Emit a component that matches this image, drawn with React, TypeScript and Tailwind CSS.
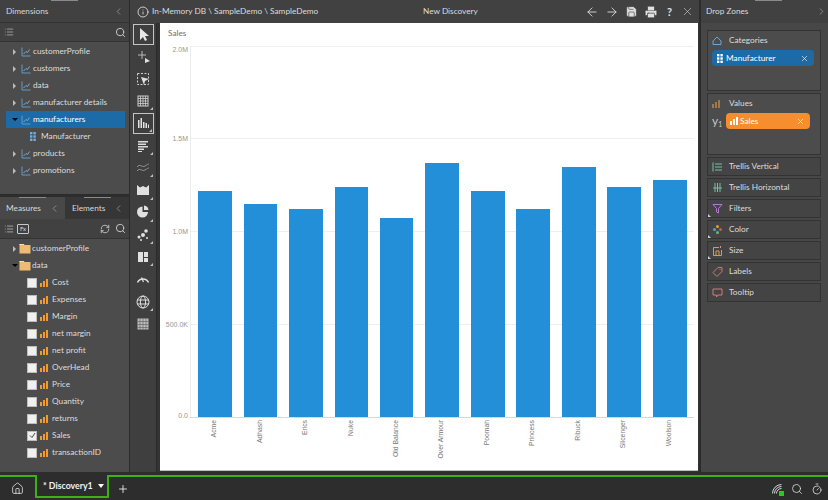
import { ArrowLeft, ArrowRight, ChevronLeft, ChevronRight, Home, Info, List, Plus, Printer, RefreshCw, Save, Search, Timer, X } from "lucide-react";
import type { ReactNode } from "react";

const FONT = "font-[family-name:Lato,sans-serif]";

const DIMENSIONS = ["customerProfile", "customers", "data", "manufacturer details"];
const MEASURES = ["Cost", "Expenses", "Margin", "net margin", "net profit", "OverHead", "Price", "Quantity", "returns", "Sales", "transactionID"];

const BARS = [
  { name: "Acme", x: 198, w: 34, top: 191 },
  { name: "Adhash", x: 244, w: 33, top: 204 },
  { name: "Erics", x: 289, w: 34, top: 209 },
  { name: "Nuke", x: 335, w: 33, top: 187 },
  { name: "Old Balance", x: 380, w: 33, top: 218 },
  { name: "Over Armour", x: 425, w: 34, top: 163 },
  { name: "Poomah", x: 471, w: 34, top: 191 },
  { name: "Princess", x: 516, w: 34, top: 209 },
  { name: "Ribuck", x: 562, w: 34, top: 167 },
  { name: "Slicenger", x: 607, w: 34, top: 187 },
  { name: "Woolson", x: 653, w: 34, top: 180 },
];

// labels sit inside the plot at both ends, so ty differs from y there
const TICKS = [
  { label: "2.0M", y: 46, ty: 52 },
  { label: "1.5M", y: 138, ty: 140.5 },
  { label: "1.0M", y: 231, ty: 233.5 },
  { label: "500.0K", y: 324, ty: 326.5 },
  { label: "0.0", y: 417, ty: 417.5 },
];

function Arrow({ open }: { open?: boolean }) {
  return open ? (
    <span className="block shrink-0 w-0 h-0 ml-[6px] mr-[3px] border-x-[3px] border-x-transparent border-t-[3px] border-t-black" />
  ) : (
    <span className="block shrink-0 w-0 h-0 ml-[7px] mr-[5px] border-y-[3px] border-y-transparent border-l-[3px] border-l-[#bbbbbb]" />
  );
}

function HierIcon() {
  return (
    <svg width="10" height="10" viewBox="0 0 10 10" fill="none" stroke="#5d9ccb" strokeWidth="1" className="mr-[2px] shrink-0">
      <path d="M1 0.5V9H9.5" />
      <path d="M2.5 7L5 4.5L6.5 5.5L8.5 2.5" stroke="#8ba6ba" />
    </svg>
  );
}

function Folder() {
  return (
    <svg width="12" height="11" viewBox="0 0 12 11" className="-ml-[2px] mr-[1px] shrink-0">
      <path d="M0.5 1H4.5L5.5 2H11.5V10.5H0.5Z" fill="#efbb72" />
      <path d="M0.5 1H4.5L5.5 2H0.5Z" fill="#f8e0b8" />
    </svg>
  );
}

function BarsIcon({ color = "#f29a2e" }: { color?: string }) {
  return (
    <svg width="8" height="8" viewBox="0 0 8 8" fill={color} className="shrink-0">
      <rect x="0" y="4" width="2" height="4" />
      <rect x="3" y="2" width="2" height="6" />
      <rect x="6" y="0" width="2" height="8" />
    </svg>
  );
}

function DotsIcon({ color = "#6fb0e0" }: { color?: string }) {
  return (
    <svg width="6" height="9" viewBox="0 0 6 9" fill={color} className="shrink-0">
      {[0, 3.3, 6.6].map((y) => (
        <g key={y}>
          <rect x="0" y={y} width="2.4" height="2.4" />
          <rect x="3.4" y={y} width="2.4" height="2.4" />
        </g>
      ))}
    </svg>
  );
}

function Row({ children, selected }: { children: ReactNode; selected?: boolean }) {
  return (
    <div className={`h-[17px] flex items-center text-[8.25px] text-[#dcdcdc] mr-[4px] ${selected ? "bg-[#1c6aa6]" : ""}`}>
      {children}
    </div>
  );
}

function Grip({ className }: { className: string }) {
  return <span className={`absolute top-0 h-[1px] bg-[#8a8a8a] ${className}`} />;
}

function LeftColumn() {
  return (
    <div className="w-[130px] flex flex-col border-r border-[#2b2b2b]">
      <div className="relative h-[195px] flex flex-col bg-[#4c4c4c] border-b border-[#2b2b2b]">
        <Grip className="left-[51px] w-[27px]" />
        <div className="h-[23px] bg-[#414141] flex items-center justify-between pl-[6px] pr-[5px] border-b border-[#333333]">
          <span className="text-[8.25px] text-[#d8d8d8]">Dimensions</span>
          <ChevronLeft size={11} color="#bdbdbd" strokeWidth={1.2} />
        </div>
        <div className="h-[19px] bg-[#414141] flex items-center justify-between pl-[4px] pr-[3px] border-b border-[#333333]">
          <List size={10} color="#a8a8a8" />
          <Search size={11} color="#cfcfcf" />
        </div>
        <div className="pt-[1px] pl-[6px]">
          {DIMENSIONS.map((d) => (
            <Row key={d}>
              <Arrow />
              <HierIcon />
              {d}
            </Row>
          ))}
          <Row selected>
            <Arrow open />
            <HierIcon />
            <span className="text-white">manufacturers</span>
          </Row>
          <Row>
            <span className="ml-[24px] mr-[5px] flex"><DotsIcon /></span>
            Manufacturer
          </Row>
          {["products", "promotions"].map((d) => (
            <Row key={d}>
              <Arrow />
              <HierIcon />
              {d}
            </Row>
          ))}
        </div>
      </div>
      <div className="relative mt-[2px] flex-1 flex flex-col bg-[#4c4c4c]">
        <Grip className="left-[19px] w-[27px]" />
        <Grip className="left-[84px] w-[27px]" />
        <div className="h-[22px] flex text-[8.25px] text-[#d8d8d8]">
          <div className="w-[65px] flex items-center justify-between bg-[#484848] pl-[6px] pr-[5px]">
            Measures
            <ChevronLeft size={11} color="#bdbdbd" strokeWidth={1.2} />
          </div>
          <div className="flex-1 flex items-center justify-between bg-[#363636] pl-[7px] pr-[5px]">
            Elements
            <ChevronLeft size={11} color="#bdbdbd" strokeWidth={1.2} />
          </div>
        </div>
        <div className="h-[20px] bg-[#414141] flex items-center pl-[4px] pr-[3px] border-b border-[#333333]">
          <List size={10} color="#b5b5b5" />
          <span className="ml-[3px] w-[12px] h-[10px] border border-[#c8c8c8] rounded-[1px] text-[6px] leading-[8px] text-center text-[#d8d8d8]">Fx</span>
          <RefreshCw size={10} color="#cfcfcf" className="ml-auto mr-[5px]" />
          <Search size={11} color="#cfcfcf" />
        </div>
        <div className="pt-[1px] pl-[6px]">
          <Row>
            <Arrow />
            <Folder />
            customerProfile
          </Row>
          <Row>
            <Arrow open />
            <Folder />
            data
          </Row>
          {MEASURES.map((m) => (
            <Row key={m}>
              <span className="ml-[21px] mr-[3px] w-[10px] h-[10px] bg-[#f0f0f0] border border-[#bdbdbd] flex items-center justify-center shrink-0">
                {m === "Sales" && (
                  <svg width="7" height="7" viewBox="0 0 7 7" fill="none" stroke="#4a4a4a" strokeWidth="1">
                    <path d="M1 3.5L3 5.5L6 1" />
                  </svg>
                )}
              </span>
              <BarsIcon />
              <span className="ml-[4px]">{m}</span>
            </Row>
          ))}
        </div>
      </div>
    </div>
  );
}

// chart type palette
const TOOL_PATHS: ReactNode[] = [
  <path key="a" d="M5 2L5 14L8 11L10 15L12 14L10 10L14 10Z" fill="#e8e8e8" />,
  <g key="b" stroke="#b8b8b8" fill="none"><path d="M7 3V11M3 7H11" /><path d="M10 10L15 13L10 15Z" fill="#e0e0e0" stroke="none" /></g>,
  <g key="c"><rect x="2.5" y="2.5" width="11" height="11" fill="none" stroke="#d0d0d0" strokeDasharray="2 1.5" /><path d="M6 6L14 8L10 10L9 14Z" fill="#e0e0e0" /></g>,
  <g key="d"><rect x="3" y="3" width="10" height="10" fill="none" stroke="#d0d0d0" /><path d="M3 5.5H13M3 8H13M3 10.5H13M5.5 3V13M8 3V13M10.5 3V13" stroke="#d0d0d0" strokeWidth="0.8" /></g>,
  <path key="e" d="M3 5H4.5V13H3ZM5.5 3H7V13H5.5ZM8 7H9.5V13H8ZM10.5 8H12V13H10.5ZM13 9.5H14V13H13Z" fill="#e4e4e4" />,
  <path key="f" d="M3 3H13V4.5H3ZM3 5.5H11V7H3ZM3 8H13V9.5H3ZM3 10.5H9V12H3ZM3 13H7V14H3Z" fill="#dcdcdc" />,
  <g key="g" fill="none" stroke="#8f8f8f" strokeWidth="1"><path d="M2 7C5 3 7 8 10 6S13 4 14 4" /><path d="M2 11C5 7 7 12 10 10S13 8 14 8" /></g>,
  <path key="h" d="M2 3L5 5.5L8 4L11 5.5L14 3V13H2Z" fill="#e0e0e0" />,
  <g key="i" fill="#e0e0e0"><path d="M7.5 8V2.5A5.5 5.5 0 1 0 13 8Z" /><path d="M9 1.5A5 5 0 0 1 13.5 6H9Z" /></g>,
  <g key="j" fill="#e0e0e0"><circle cx="4" cy="10" r="1.5" /><circle cx="8" cy="8" r="2" /><circle cx="11" cy="4" r="1.8" /><circle cx="12" cy="11" r="1" /><circle cx="6" cy="13" r="1" /></g>,
  <path key="k" d="M3 3H8V13H3ZM9 3H13V8H9ZM9 9H13V13H9Z" fill="#e0e0e0" />,
  <g key="l" fill="none" stroke="#e0e0e0" strokeWidth="1.5"><path d="M2.5 11.5A6 6 0 0 1 13.5 11.5" /><path d="M8.5 11L6.5 6.5" strokeWidth="1.2" /></g>,
  <g key="m" fill="none" stroke="#e0e0e0" strokeWidth="1"><circle cx="8" cy="8" r="6" /><ellipse cx="8" cy="8" rx="2.6" ry="6" /><path d="M2 6H14M2 10H14" /></g>,
  <g key="n"><rect x="2.5" y="2.5" width="11" height="11" fill="#bcbcbc" /><path d="M5 2.5V13.5M8 2.5V13.5M11 2.5V13.5M2.5 5.5H13.5M2.5 8.5H13.5M2.5 11.5H13.5" stroke="#5a5a5a" strokeWidth="0.6" /></g>,
];

function ToolColumn() {
  return (
    <div className="w-[27px] flex flex-col items-center bg-[#3f3f3f] border-r border-[#2b2b2b]">
      {TOOL_PATHS.map((p, i) => (
        <div
          key={i}
          className={`relative shrink-0 w-[21px] h-[21px] my-[0.65px] flex items-center justify-center ${i === 0 || i === 4 ? "border border-[#c4c4c4]" : ""}`}
        >
          <svg width="16" height="16" viewBox="0 0 16 16">{p}</svg>
          {i !== 0 && i !== 1 && i !== 2 && i !== 11 && i !== 13 && (
            <span className="absolute right-[1px] bottom-[1px] w-0 h-0 border-l-[3px] border-l-transparent border-b-[3px] border-b-[#bdbdbd]" />
          )}
        </div>
      ))}
    </div>
  );
}

function Chart() {
  const font = "'Liberation Sans', Arial, sans-serif";
  return (
    <div className="w-[538px] h-[448px] bg-white border-b border-[#bdbdbd]">
      <svg width="538" height="447" viewBox="160 23 538 447" className="block">
        <text x="168" y="36" fontSize="8.25" fill="#7a6a5c" fontFamily="Lato, sans-serif">Sales</text>
        {TICKS.map((t) => (
          <g key={t.label}>
            <line x1="190" x2="694" y1={t.y + 0.5} y2={t.y + 0.5} stroke={t.y === 417 ? "#d8d8d8" : "#efefef"} />
            <text x="188" y={t.ty} textAnchor="end" fontSize="7" fill="#969696" fontFamily={font}>{t.label}</text>
          </g>
        ))}
        <line x1="190.5" x2="190.5" y1="46" y2="417" stroke="#ececec" />
        {BARS.map((b) => (
          <g key={b.name}>
            <rect x={b.x} y={b.top} width={b.w} height={417 - b.top} fill="#228fd8" />
            <text
              transform={`translate(${b.x + b.w / 2 + 1} 420) rotate(-90)`}
              textAnchor="end"
              fontSize="6.8"
              fill="#777777"
              fontFamily={font}
            >
              {b.name}
            </text>
          </g>
        ))}
      </svg>
    </div>
  );
}

function MainColumn() {
  return (
    <div className="w-[569px] flex flex-col">
      <div className="h-[23px] shrink-0 bg-[#414141] flex items-center pl-[7px] pr-[5px] relative">
        <Info size={12} color="#ededed" strokeWidth={1.6} />
        <span className="ml-[3px] text-[8.25px] text-[#dcdcdc]">In-Memory DB \ SampleDemo \ SampleDemo</span>
        <span className="absolute left-[293px] text-[8.25px] text-[#dcdcdc]">New Discovery</span>
        <div className="ml-auto flex items-center gap-[6px] text-[#e0e0e0]">
          <ArrowLeft size={14} strokeWidth={1.5} />
          <ArrowRight size={14} strokeWidth={1.5} />
          <Save size={13} fill="#e0e0e0" stroke="#414141" strokeWidth={1.2} />
          <Printer size={14} fill="#e0e0e0" stroke="#414141" strokeWidth={1.2} />
          <span className="w-[11px] text-center text-[11px] font-bold leading-none">?</span>
          <X size={13} strokeWidth={1} />
        </div>
      </div>
      <div className="flex flex-1">
        <ToolColumn />
        <div className="flex-1 pl-[3px] bg-[#333333]">
          <Chart />
        </div>
      </div>
    </div>
  );
}

function Chip({ color, icon, label, className }: { color: string; icon: ReactNode; label: string; className: string }) {
  return (
    <div className={`h-[16px] rounded-[4px] flex items-center pl-[3px] pr-[5px] text-[8.25px] text-white ${color} ${className}`}>
      <span className="flex w-[9px] mr-[2px] justify-center">{icon}</span>
      <span>{label}</span>
      <X size={9} color="#ffffff" className="ml-auto" strokeWidth={1.6} />
    </div>
  );
}

const ZONES: { label: string; icon: ReactNode; corner?: boolean }[] = [
  { label: "Trellis Vertical", icon: <path d="M1 1.5V10.5M3 3H10M3 6H10M3 9H10" stroke="#6fc3a6" fill="none" /> },
  { label: "Trellis Horizontal", icon: <path d="M1 6H10M3 1V10M5.5 1V10M8 1V10" stroke="#6fc3a6" fill="none" /> },
  { label: "Filters", corner: true, icon: <path d="M1 1.5H10L6.5 5.5V10L4.5 9V5.5Z" stroke="#b678c9" fill="none" /> },
  {
    label: "Color",
    corner: true,
    icon: (
      <g>
        <circle cx="5.5" cy="2.5" r="1.5" fill="#e0a030" />
        <circle cx="2.5" cy="5.5" r="1.5" fill="#5a9fd6" />
        <circle cx="8.5" cy="5.5" r="1.5" fill="#c85a5a" />
        <circle cx="5.5" cy="8.5" r="1.5" fill="#6fb56f" />
      </g>
    ),
  },
  { label: "Size", corner: true, icon: <path d="M1.5 2.5H7M1.5 2.5V10.5H9.5V5M4 10V6H7V10M8.5 1V3" stroke="#d49b5c" fill="none" /> },
  { label: "Labels", icon: <path d="M1 6.5L6 1.5H10V5.5L5 10.5ZM7.5 3.5H8.5" stroke="#c97a7a" fill="none" /> },
  { label: "Tooltip", icon: <path d="M1 2H10V8H6L4.5 10V8H1Z" stroke="#d27a7a" fill="none" /> },
];

function RightColumn() {
  return (
    <div className="relative ml-[1px] flex-1 bg-[#474747] border-l border-[#2b2b2b] text-[8.25px] text-[#dcdcdc]">
      <Grip className="left-[54px] w-[27px]" />
      <div className="h-[23px] bg-[#414141] flex items-center justify-between pl-[5px] pr-[1px]">
        Drop Zones
        <ChevronRight size={11} color="#bdbdbd" strokeWidth={1.2} />
      </div>
      <div className="pl-[6px] pr-[7px] pt-[7px] flex flex-col gap-[2px]">
        <div className="h-[61px] border border-[#333333] bg-[#4c4c4c] px-[4px]">
          <div className="h-[19px] flex items-center">
            <svg width="10" height="9" viewBox="0 0 10 9" fill="none" stroke="#6fa5cf" className="mr-[7px]">
              <path d="M1 8.5H9V5L5 1L1 5Z" />
            </svg>
            Categories
          </div>
          <Chip color="bg-[#1c6aa6]" label="Manufacturer" className="w-[102px]" icon={<DotsIcon color="#ffffff" />} />
        </div>
        <div className="relative h-[62px] border border-[#333333] bg-[#4c4c4c] px-[4px]">
          <div className="h-[19px] flex items-center">
            <span className="mr-[7px] flex"><BarsIcon color="#a07a48" /></span>
            <span className="ml-[2px]">Values</span>
          </div>
          <div className="flex items-center">
            <span className="w-[14px] text-[12px] text-[#c4c4c4] leading-none">y<sub className="text-[7px]">1</sub></span>
            <Chip color="bg-[#f68e2e]" label="Sales" className="w-[84px]" icon={<BarsIcon color="#ffffff" />} />
          </div>
        </div>
        {ZONES.map((z) => (
          <div key={z.label} className="relative h-[19px] border border-[#333333] bg-[#444444] flex items-center pl-[4px]">
            <svg width="11" height="11" viewBox="0 0 11 11" className="mr-[6px] shrink-0">{z.icon}</svg>
            {z.label}
            {z.corner && <span className="absolute left-0 bottom-0 w-0 h-0 border-r-[3px] border-r-transparent border-b-[3px] border-b-[#cfcfcf]" />}
          </div>
        ))}
      </div>
    </div>
  );
}

function BottomBar() {
  return (
    <div className="h-[25px] flex bg-[#2d2d2d] text-white">
      <div className="w-[35px] border-t-2 border-[#3cb015] flex items-center justify-center">
        <Home size={13} strokeWidth={1.4} color="#ececec" />
      </div>
      <div className="w-[74px] h-[23px] border-x-2 border-b-2 border-[#3cb015] flex items-center pl-[6px] text-[8.75px] font-bold text-[#f2f2f2] whitespace-nowrap">
        * Discovery1
        <span className="ml-[5px] w-0 h-0 border-x-[3.5px] border-x-transparent border-t-[4px] border-t-white" />
      </div>
      <div className="flex-1 border-t-2 border-[#3cb015] flex items-center pl-[8px] pr-[5px]">
        <Plus size={12} strokeWidth={1.8} color="#ececec" />
        <div className="ml-auto flex items-center gap-[8px]">
          <span className="relative flex">
            <svg width="12" height="12" viewBox="0 0 12 12" fill="none" stroke="#d6d6d6">
              <path d="M1 10A9 9 0 0 1 10 1M3 10A7 7 0 0 1 10 3M5 10A5 5 0 0 1 10 5" transform="translate(0.5 0.5)" />
            </svg>
            <span className="absolute right-[-1px] bottom-[-1px] w-[5px] h-[5px] bg-[#1fd01f]" />
          </span>
          <Search size={12} color="#dedede" strokeWidth={1.6} />
          <Timer size={12} color="#dedede" strokeWidth={1.6} />
        </div>
      </div>
    </div>
  );
}

export default function App() {
  return (
    <div className={`w-[828px] h-[500px] flex flex-col bg-[#2d2d2d] overflow-hidden ${FONT}`}>
      <div className="flex h-[472px] shrink-0">
        <LeftColumn />
        <MainColumn />
        <RightColumn />
      </div>
      <div className="h-[3px] shrink-0 bg-[#2d2d2d]" />
      <BottomBar />
    </div>
  );
}
